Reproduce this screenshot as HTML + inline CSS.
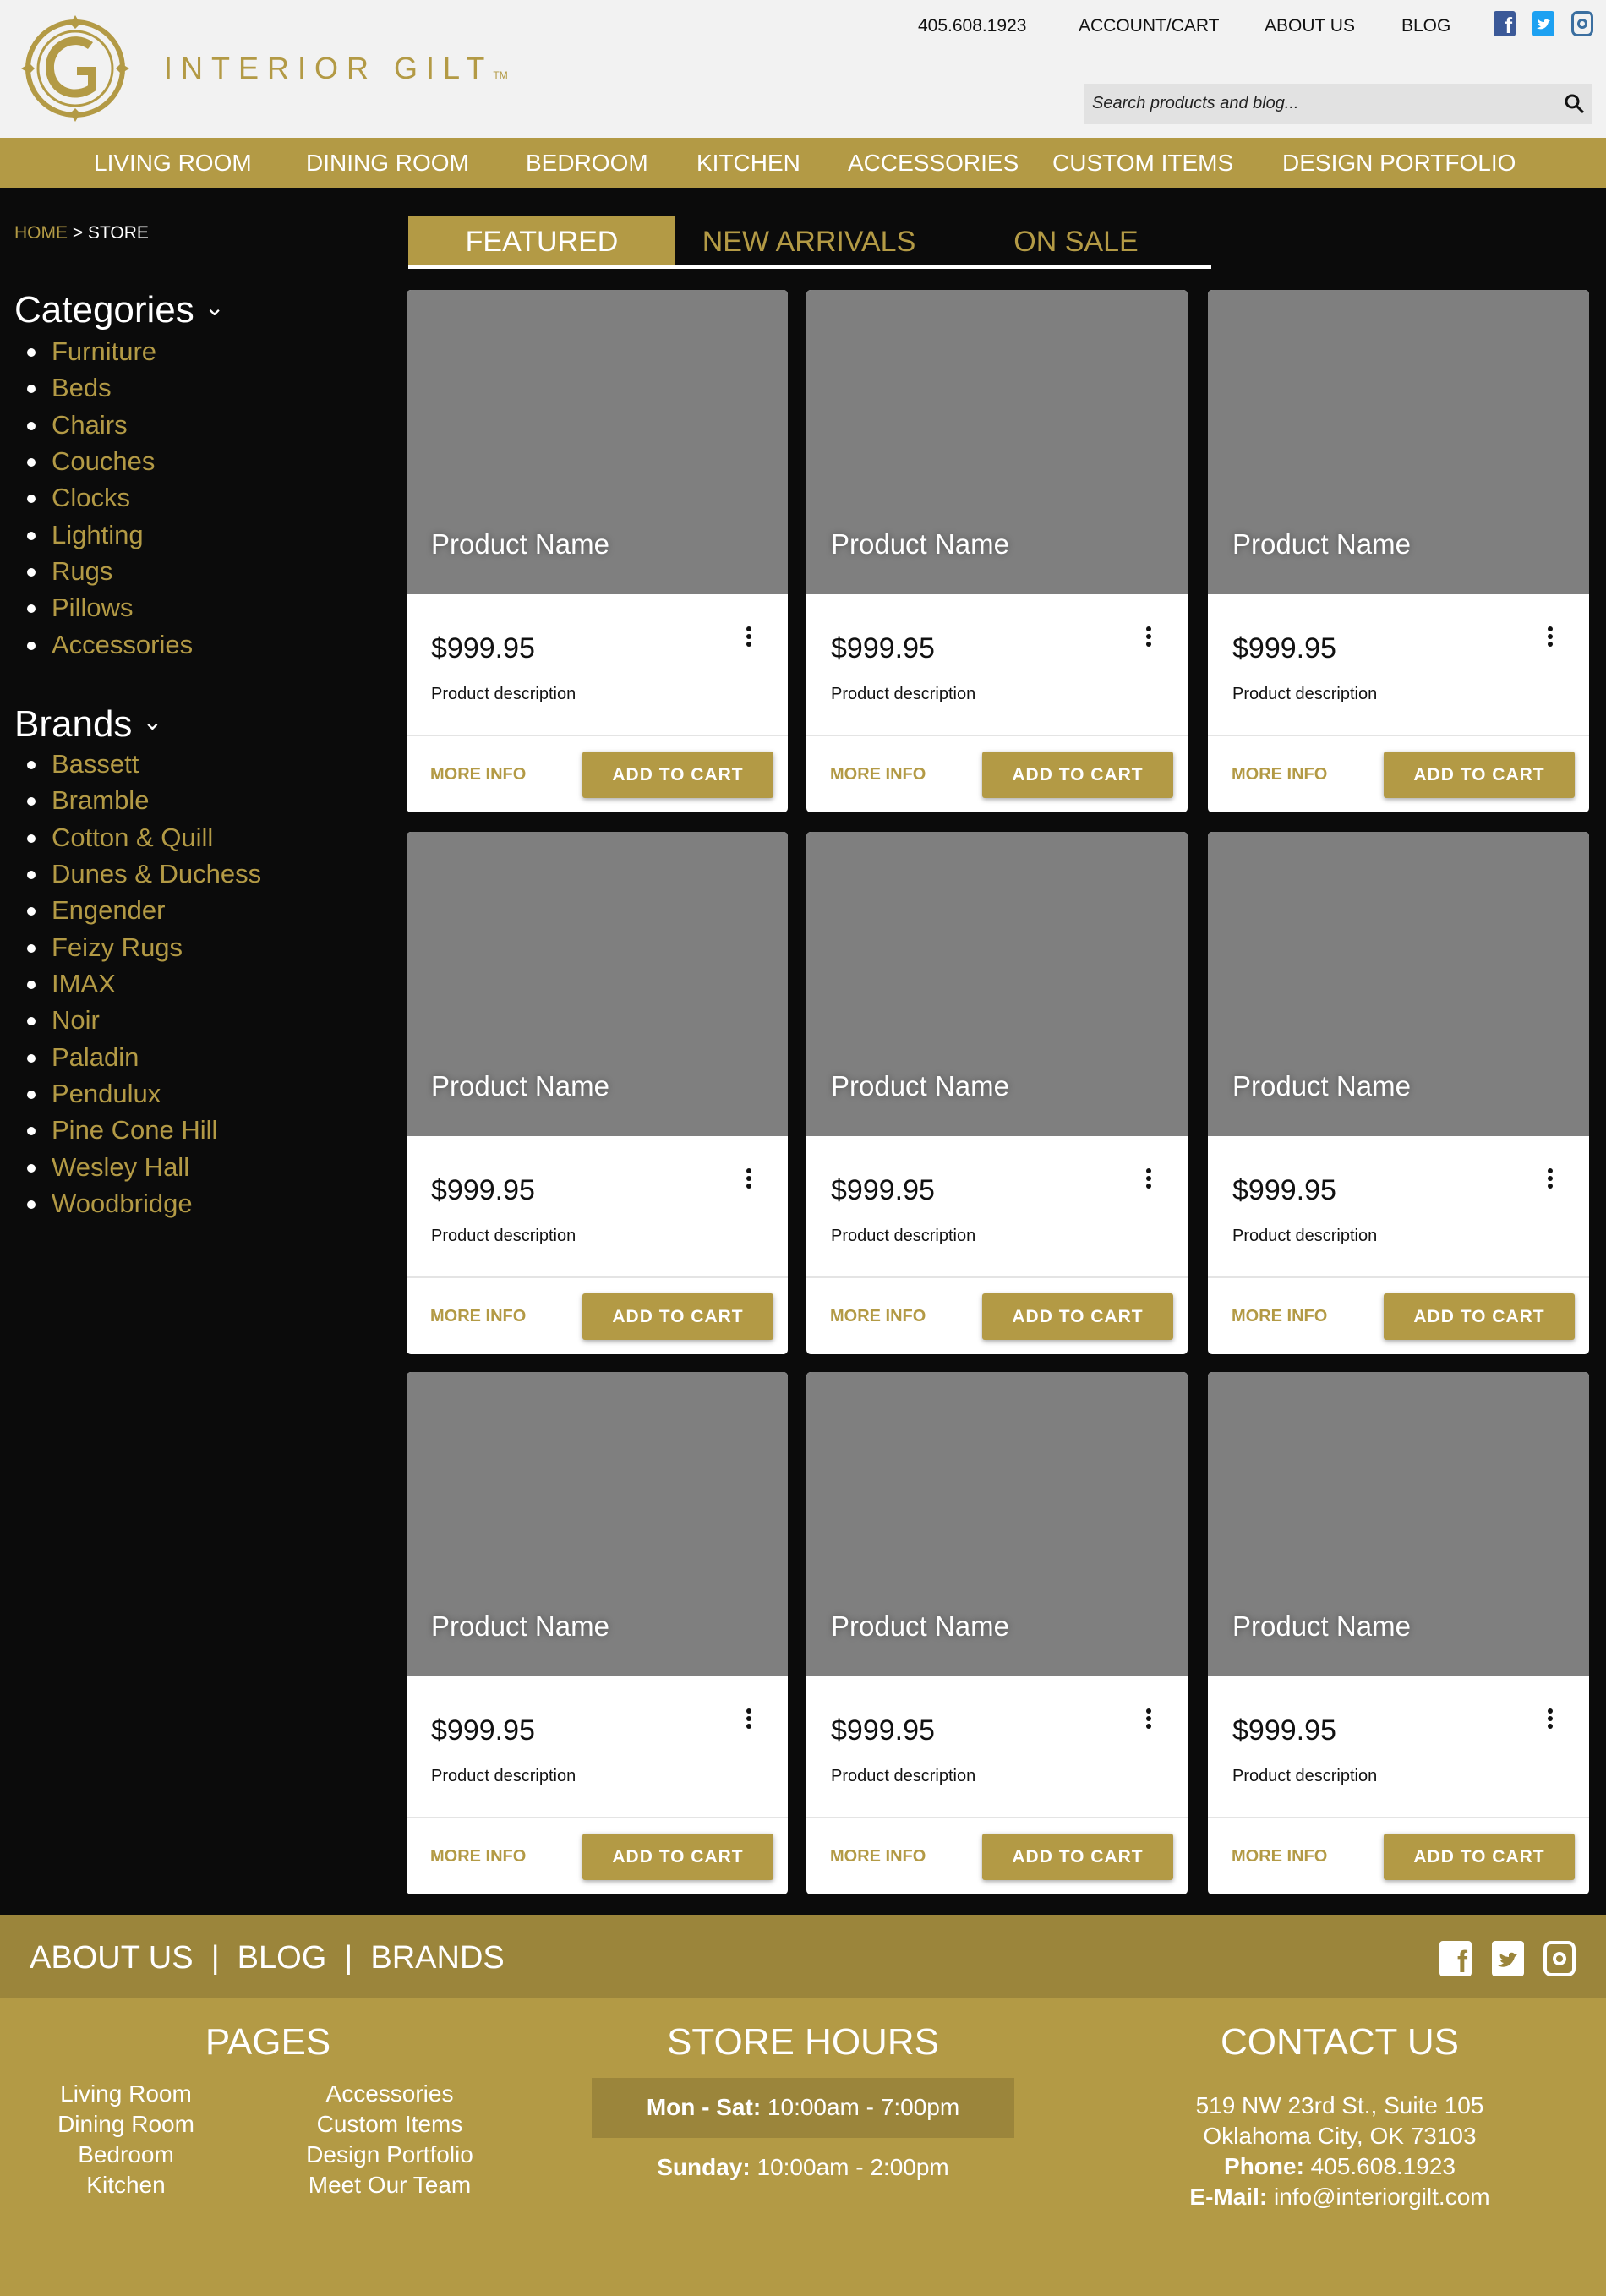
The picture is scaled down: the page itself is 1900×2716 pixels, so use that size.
<!DOCTYPE html>
<html><head><meta charset="utf-8"><style>
*{margin:0;padding:0;box-sizing:border-box}
body{width:1900px;height:2716px;position:relative;font-family:"Liberation Sans",sans-serif;background:#0b0b0b;overflow:hidden}
.a{position:absolute;white-space:nowrap}
#hdr{position:absolute;left:0;top:0;width:1900px;height:163px;background:#f2f2f2}
#nav{position:absolute;left:0;top:163px;width:1900px;height:59px;background:#b39a45}
.nv{position:absolute;top:176px;color:#fff;font-size:28px;line-height:34px}
.tl{position:absolute;top:18px;font-size:21px;color:#111;line-height:26px}
.gold{color:#b39a45}
.li{position:absolute;left:38px;font-size:31px;color:#b39a45;line-height:40px}
.li:before{content:"";position:absolute;left:-6px;top:16px;width:10px;height:10px;border-radius:50%;background:#fff}
.li span{margin-left:23px}
.card{position:absolute;width:451px;height:618px;background:#fff;border-radius:5px;overflow:hidden}
.card .im{position:absolute;left:0;top:0;width:100%;height:360px;background:#7f7f7f}
.card .pn{position:absolute;left:29px;top:282px;font-size:33px;color:#fff;text-shadow:0 0 8px rgba(0,0,0,.4)}
.card .pr{position:absolute;left:29px;top:405px;font-size:34px;color:#111}
.card .ds{position:absolute;left:29px;top:467px;font-size:20px;color:#111}
.card .ln{position:absolute;left:0;top:526px;width:100%;height:2px;background:#e4e4e4}
.card .mi{position:absolute;left:28px;top:562px;font-size:20px;color:#b39a45;font-weight:bold}
.card .bt{position:absolute;left:208px;top:546px;width:226px;height:55px;background:#b39a45;border-radius:3px;color:#fff;font-size:21px;font-weight:bold;text-align:center;line-height:55px;letter-spacing:1px;box-shadow:0 2px 6px rgba(0,0,0,.35)}
.card .dt{position:absolute;left:402px;top:398px;width:6px}
.card .dt i{display:block;width:6px;height:6px;border-radius:50%;background:#111;margin-bottom:3px}
.fl{position:absolute;color:#fff;font-size:28px;text-align:center;line-height:36px}
</style></head><body>
<div id="hdr"></div>
<svg class="a" style="left:17px;top:14px" width="144" height="134" viewBox="0 0 144 134">
<ellipse cx="72" cy="67" rx="56" ry="55" fill="none" stroke="#b39a45" stroke-width="6"/>
<ellipse cx="72" cy="67" rx="44" ry="44" fill="none" stroke="#b39a45" stroke-width="3"/>
<path d="M90 40 C70 25 40 40 42 68 C44 95 72 104 92 90 L92 70 L74 70" fill="none" stroke="#b39a45" stroke-width="10"/>
<path d="M72 4 l6 10 -6 6 -6-6z M72 130 l6-10 -6-6 -6 6z M8 67 l10-6 6 6 -6 6z M136 67 l-10-6 -6 6 6 6z" fill="#b39a45"/>
</svg>
<div class="a" style="left:194px;top:60px;font-size:36px;color:#b39a45;letter-spacing:10px;font-weight:300">INTERIOR GILT<span style="font-size:12px;letter-spacing:0">TM</span></div>
<div class="tl" style="left:1086px">405.608.1923</div>
<div class="tl" style="left:1276px">ACCOUNT/CART</div>
<div class="tl" style="left:1496px">ABOUT US</div>
<div class="tl" style="left:1658px">BLOG</div>
<div class="a" style="left:1767px;top:13px;width:26px;height:30px;background:#3b5998;border-radius:3px;color:#fff;font-weight:bold;font-size:26px;text-align:right;padding-right:4px;line-height:34px">f</div>
<svg class="a" style="left:1813px;top:13px" width="26" height="30"><rect width="26" height="30" rx="3" fill="#1da1f2"/><path d="M5 20c5 3 12 1 14-7l2-2-2 0c-1-2-4-2-5 0l0 2c-3 0-5-1-7-3-1 2 0 4 2 5l-2 0c0 2 2 3 3 3-1 1-3 2-5 2z" fill="#fff"/></svg>
<div class="a" style="left:1859px;top:13px;width:26px;height:30px;border:3px solid #3b6fa0;border-radius:7px"><div style="width:12px;height:12px;border:3px solid #3b6fa0;border-radius:50%;margin:6px auto"></div></div>
<div class="a" style="left:1282px;top:99px;width:602px;height:48px;background:#e2e2e2"></div>
<div class="a" style="left:1292px;top:111px;font-size:20px;font-style:italic;color:#222">Search products and blog...</div>
<svg class="a" style="left:1850px;top:110px" width="26" height="26"><circle cx="10" cy="10" r="7" fill="none" stroke="#111" stroke-width="3"/><line x1="15" y1="15" x2="23" y2="23" stroke="#111" stroke-width="3"/></svg>
<div id="nav"></div>
<div class="nv" style="left:111px">LIVING ROOM</div>
<div class="nv" style="left:362px">DINING ROOM</div>
<div class="nv" style="left:622px">BEDROOM</div>
<div class="nv" style="left:824px">KITCHEN</div>
<div class="nv" style="left:1003px">ACCESSORIES</div>
<div class="nv" style="left:1245px">CUSTOM ITEMS</div>
<div class="nv" style="left:1517px">DESIGN PORTFOLIO</div>

<div class="a" style="left:17px;top:264px;font-size:21px;color:#fff"><span class="gold">HOME</span> &gt; STORE</div>
<div class="a" style="left:483px;top:256px;width:316px;height:62px;background:#b39a45"></div>
<div class="a" style="left:483px;top:314px;width:950px;height:4px;background:#fff"></div>
<div class="a" style="left:483px;top:267px;width:316px;text-align:center;font-size:34px;color:#fff">FEATURED</div>
<div class="a" style="left:799px;top:267px;width:316px;text-align:center;font-size:34px;color:#b39a45">NEW ARRIVALS</div>
<div class="a" style="left:1115px;top:267px;width:316px;text-align:center;font-size:34px;color:#b39a45">ON SALE</div>

<div class="a" style="left:17px;top:342px;font-size:44px;color:#fff">Categories <span style="font-size:28px;vertical-align:8px">&#8964;</span></div>
<div class="li" style="top:396px"><span>Furniture</span></div>
<div class="li" style="top:439px"><span>Beds</span></div>
<div class="li" style="top:483px"><span>Chairs</span></div>
<div class="li" style="top:526px"><span>Couches</span></div>
<div class="li" style="top:569px"><span>Clocks</span></div>
<div class="li" style="top:613px"><span>Lighting</span></div>
<div class="li" style="top:656px"><span>Rugs</span></div>
<div class="li" style="top:699px"><span>Pillows</span></div>
<div class="li" style="top:743px"><span>Accessories</span></div>
<div class="a" style="left:17px;top:832px;font-size:44px;color:#fff">Brands <span style="font-size:28px;vertical-align:8px">&#8964;</span></div>
<div class="li" style="top:884px"><span>Bassett</span></div>
<div class="li" style="top:927px"><span>Bramble</span></div>
<div class="li" style="top:971px"><span>Cotton &amp; Quill</span></div>
<div class="li" style="top:1014px"><span>Dunes &amp; Duchess</span></div>
<div class="li" style="top:1057px"><span>Engender</span></div>
<div class="li" style="top:1101px"><span>Feizy Rugs</span></div>
<div class="li" style="top:1144px"><span>IMAX</span></div>
<div class="li" style="top:1187px"><span>Noir</span></div>
<div class="li" style="top:1231px"><span>Paladin</span></div>
<div class="li" style="top:1274px"><span>Pendulux</span></div>
<div class="li" style="top:1317px"><span>Pine Cone Hill</span></div>
<div class="li" style="top:1361px"><span>Wesley Hall</span></div>
<div class="li" style="top:1404px"><span>Woodbridge</span></div>

<div id="cards"></div>
<script>
var xs=[481,954,1429],ys=[343,984,1623],h='';
ys.forEach(function(y){xs.forEach(function(x){
h+='<div class="card" style="left:'+x+'px;top:'+y+'px"><div class="im"></div><div class="pn">Product Name</div><div class="pr">$999.95</div><div class="dt"><i></i><i></i><i></i></div><div class="ds">Product description</div><div class="ln"></div><div class="mi">MORE INFO</div><div class="bt">ADD TO CART</div></div>';
});});
document.getElementById('cards').outerHTML=h;
</script>

<div class="a" style="left:0;top:2265px;width:1900px;height:99px;background:#9b853b"></div>
<div class="a" style="left:0;top:2364px;width:1900px;height:352px;background:#b39a45"></div>
<div class="a" style="left:35px;top:2295px;font-size:38px;color:#fff">ABOUT US &nbsp;<span>|</span>&nbsp; BLOG &nbsp;<span>|</span>&nbsp; BRANDS</div>
<div class="a" style="left:1703px;top:2296px;width:38px;height:42px;background:#fff;border-radius:4px;color:#9b853b;font-weight:bold;font-size:36px;text-align:right;padding-right:5px;line-height:50px">f</div>
<svg class="a" style="left:1765px;top:2296px" width="38" height="42"><rect width="38" height="42" rx="4" fill="#fff"/><path d="M7 29c7 4 17 1 20-10l3-3-3 0c-1-3-6-3-7 0l0 3c-4 0-7-2-10-4-1 3 0 6 3 7l-3 0c0 3 3 4 4 4-1 1-4 3-7 3z" fill="#9b853b"/></svg>
<div class="a" style="left:1826px;top:2296px;width:38px;height:42px;border:4px solid #fff;border-radius:9px"><div style="width:16px;height:16px;border:4px solid #fff;border-radius:50%;margin:9px auto"></div></div>
<div class="fl" style="left:117px;top:2388px;width:400px;font-size:44px;line-height:56px">PAGES</div>
<div class="fl" style="left:700px;top:2388px;width:500px;font-size:44px;line-height:56px">STORE HOURS</div>
<div class="fl" style="left:1335px;top:2388px;width:500px;font-size:44px;line-height:56px">CONTACT US</div>
<div class="fl" style="left:29px;top:2459px;width:240px">Living Room<br>Dining Room<br>Bedroom<br>Kitchen</div>
<div class="fl" style="left:341px;top:2459px;width:240px">Accessories<br>Custom Items<br>Design Portfolio<br>Meet Our Team</div>
<div class="a" style="left:700px;top:2458px;width:500px;height:71px;background:#9b853b"></div>
<div class="fl" style="left:700px;top:2475px;width:500px"><b>Mon - Sat:</b> 10:00am - 7:00pm</div>
<div class="fl" style="left:700px;top:2546px;width:500px"><b>Sunday:</b> 10:00am - 2:00pm</div>
<div class="fl" style="left:1335px;top:2473px;width:500px">519 NW 23rd St., Suite 105<br>Oklahoma City, OK 73103<br><b>Phone:</b> 405.608.1923<br><b>E-Mail:</b> info@interiorgilt.com</div>
</body></html>
